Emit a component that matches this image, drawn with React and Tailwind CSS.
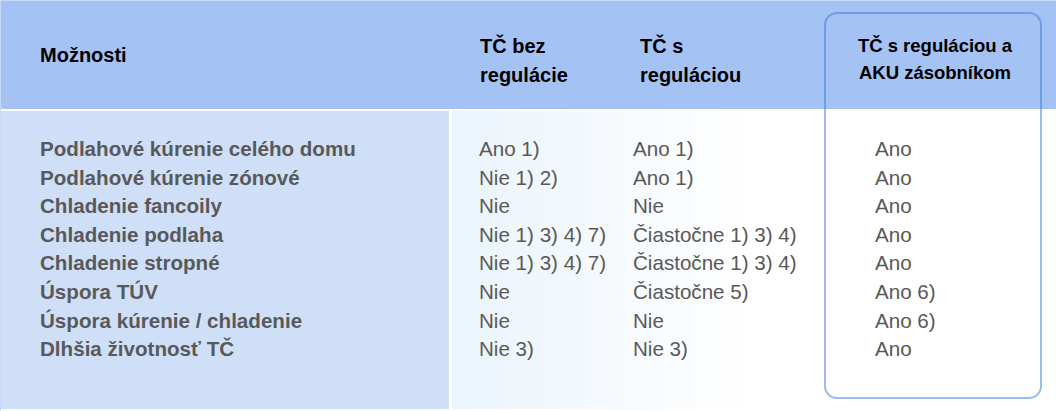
const rows = [
    ['Podlahové kúrenie celého domu', 'Ano 1)', 'Ano 1)', 'Ano'],
    ['Podlahové kúrenie zónové', 'Nie 1) 2)', 'Ano 1)', 'Ano'],
    ['Chladenie fancoily', 'Nie', 'Nie', 'Ano'],
    ['Chladenie podlaha', 'Nie 1) 3) 4) 7)', 'Čiastočne 1) 3) 4)', 'Ano'],
    ['Chladenie stropné', 'Nie 1) 3) 4) 7)', 'Čiastočne 1) 3) 4)', 'Ano'],
    ['Úspora TÚV', 'Nie', 'Čiastočne 5)', 'Ano 6)'],
    ['Úspora kúrenie / chladenie', 'Nie', 'Nie', 'Ano 6)'],
    ['Dlhšia životnosť TČ', 'Nie 3)', 'Nie 3)', 'Ano'],
];

export default function App() {
    return (
        <div className="relative h-[411px] w-[1056px] overflow-hidden border-l border-t border-[#c9daf8] bg-white font-['Liberation_Sans',Arial,sans-serif]">
            {/* header band */}
            <div className="flex h-[108px] bg-[#a4c2f4] text-black">
                <div className="flex w-[479px] items-center pl-[39px] text-[20px] font-bold">Možnosti</div>
                <div className="w-[160px] pt-[31px] text-[20px] font-bold leading-[29px]">
                    TČ bez
                    <br />
                    regulácie
                </div>
                <div className="w-[184px] pt-[31px] text-[20px] font-bold leading-[29px]">
                    TČ s
                    <br />
                    reguláciou
                </div>
                <div className="flex-1 pr-[10px] pt-[31px] text-center text-[18.5px] font-bold leading-[27px]">
                    TČ s reguláciou a
                    <br />
                    AKU zásobníkom
                </div>
            </div>

            {/* body */}
            <div className="mt-[2px] flex h-[298px] text-[20.6px] leading-[28.6px] text-[#595959]">
                <div className="w-[448px] bg-[#cfdff8] pl-[39px] pt-[24px] font-bold">
                    {rows.map((r) => (
                        <div key={r[0]}>{r[0]}</div>
                    ))}
                </div>
                <div className="ml-[3px] flex flex-1 bg-gradient-to-r from-[#ebf4fc] via-white to-white pl-[27px] pt-[24px]">
                    <div className="w-[154px]">
                        {rows.map((r) => (
                            <div key={r[0]}>{r[1]}</div>
                        ))}
                    </div>
                    <div className="w-[242px]">
                        {rows.map((r) => (
                            <div key={r[0]}>{r[2]}</div>
                        ))}
                    </div>
                    <div>
                        {rows.map((r) => (
                            <div key={r[0]}>{r[3]}</div>
                        ))}
                    </div>
                </div>
            </div>

            {/* highlight frame over the last column */}
            <div className="pointer-events-none absolute left-[823px] top-[11px] h-[387px] w-[218px] rounded-[13px] border-2 border-[#3c78d8]/50" />
        </div>
    );
}
